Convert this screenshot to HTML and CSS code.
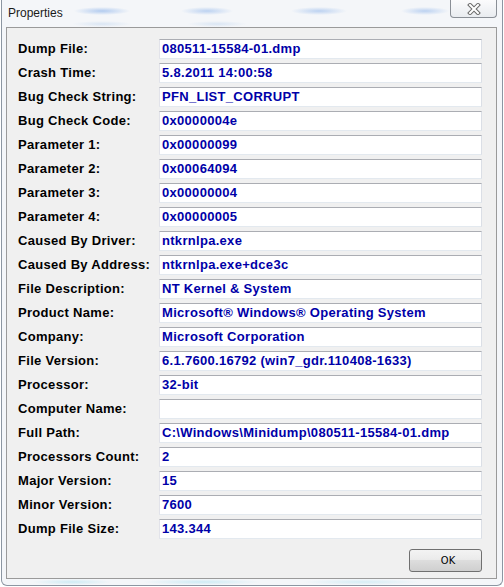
FILE: index.html
```html
<html>

<head>
    <link rel="stylesheet" href="styles.css">
</head>

<body>
    <div class="window">
        <div class="titlebar">
            <span class="title">Properties</span>
            <button class="close">
                <svg width="14" height="12" viewBox="0 0 14 12">
                    <path d="M3 2 L11 10 M11 2 L3 10" stroke="#6a6a6a" stroke-width="4" stroke-linecap="square" fill="none"/>
                    <path d="M3 2 L11 10 M11 2 L3 10" stroke="#ffffff" stroke-width="2" stroke-linecap="square" fill="none"/>
                </svg>
            </button>
        </div>
        <div class="panel">
            <div class="fields">
                <label>Dump File:</label><div class="value">080511-15584-01.dmp</div>
                <label>Crash Time:</label><div class="value">5.8.2011 14:00:58</div>
                <label>Bug Check String:</label><div class="value">PFN_LIST_CORRUPT</div>
                <label>Bug Check Code:</label><div class="value">0x0000004e</div>
                <label>Parameter 1:</label><div class="value">0x00000099</div>
                <label>Parameter 2:</label><div class="value">0x00064094</div>
                <label>Parameter 3:</label><div class="value">0x00000004</div>
                <label>Parameter 4:</label><div class="value">0x00000005</div>
                <label>Caused By Driver:</label><div class="value">ntkrnlpa.exe</div>
                <label>Caused By Address:</label><div class="value">ntkrnlpa.exe+dce3c</div>
                <label>File Description:</label><div class="value">NT Kernel &amp; System</div>
                <label>Product Name:</label><div class="value">Microsoft® Windows® Operating System</div>
                <label>Company:</label><div class="value">Microsoft Corporation</div>
                <label>File Version:</label><div class="value">6.1.7600.16792 (win7_gdr.110408-1633)</div>
                <label>Processor:</label><div class="value">32-bit</div>
                <label>Computer Name:</label><div class="value"></div>
                <label>Full Path:</label><div class="value">C:\Windows\Minidump\080511-15584-01.dmp</div>
                <label>Processors Count:</label><div class="value">2</div>
                <label>Major Version:</label><div class="value">15</div>
                <label>Minor Version:</label><div class="value">7600</div>
                <label>Dump File Size:</label><div class="value">143.344</div>
            </div>
            <div class="buttons">
                <button class="ok">OK</button>
            </div>
        </div>
    </div>
</body>

</html>
```
FILE: styles.css
```css
body {
    margin: 0;
    background: #ffffff;
    font-family: "Liberation Sans", Arial, sans-serif;
}

.window {
    box-sizing: border-box;
    width: 502px;
    height: 586px;
    margin-left: 1px;
    padding: 0 5px 6px 4px;
    border: 1px solid #8c96a2;
    border-top: none;
    border-radius: 0 0 6px 6px;
    background:
        radial-gradient(ellipse 28px 4px at 100px 11px, rgba(150, 185, 235, 0.7), transparent),
        radial-gradient(ellipse 26px 4px at 205px 11px, rgba(150, 185, 235, 0.6), transparent),
        radial-gradient(ellipse 28px 4px at 317px 11px, rgba(150, 185, 235, 0.6), transparent),
        radial-gradient(ellipse 24px 4px at 423px 11px, rgba(150, 185, 235, 0.6), transparent),
        radial-gradient(ellipse 30px 3px at 100px 24px, rgba(170, 200, 235, 0.35), transparent),
        radial-gradient(ellipse 30px 3px at 215px 24px, rgba(170, 200, 235, 0.35), transparent),
        radial-gradient(ellipse 40px 3px at 70px 582px, rgba(170, 225, 240, 0.5), transparent),
        radial-gradient(ellipse 60px 3px at 200px 582px, rgba(170, 225, 240, 0.5), transparent),
        radial-gradient(ellipse 60px 3px at 360px 582px, rgba(170, 225, 240, 0.4), transparent),
        #f4f6f9;
}

.titlebar {
    height: 27px;
    display: flex;
    justify-content: space-between;
    align-items: flex-start;
}

.title {
    margin: 6px 0 0 2px;
    font-size: 12px;
    line-height: 14px;
    color: #1a1a1a;
}

.close {
    box-sizing: border-box;
    width: 47px;
    height: 18px;
    padding: 0;
    border: 1px solid #8a8f96;
    border-top: none;
    border-radius: 0 0 4px 4px;
    background: linear-gradient(#fbfbfc, #e9ecf0);
    display: flex;
    align-items: center;
    justify-content: center;
}

.panel {
    box-sizing: border-box;
    height: 552px;
    padding: 11px 14px 6px 11px;
    border: 1px solid #9a9a9a;
    background: #f0f0f0;
}

.fields {
    display: grid;
    grid-template-columns: 141px 323px;
    grid-auto-rows: 20px;
    row-gap: 4px;
}

.fields label {
    font-size: 13px;
    font-weight: bold;
    letter-spacing: 0.3px;
    line-height: 20px;
    color: #000000;
}

.value {
    box-sizing: border-box;
    height: 20px;
    padding-left: 2px;
    border: 1px solid;
    border-color: #abadb3 #dbdfe6 #e3e9ef #e2e3ea;
    background: #ffffff;
    font-size: 13px;
    font-weight: bold;
    letter-spacing: 0.3px;
    line-height: 18px;
    color: #0000a8;
    white-space: nowrap;
    overflow: hidden;
}

.buttons {
    display: flex;
    justify-content: flex-end;
    margin-top: 10px;
}

.ok {
    box-sizing: border-box;
    width: 73px;
    height: 23px;
    padding: 0 0 0 5px;
    border: 1px solid #707070;
    border-radius: 3px;
    background: linear-gradient(#f3f3f3 0%, #ebebeb 45%, #dddddd 50%, #cfcfcf 100%);
    font-family: "DejaVu Sans Condensed", "Liberation Sans", sans-serif;
    font-size: 11px;
    color: #000000;
}
```
